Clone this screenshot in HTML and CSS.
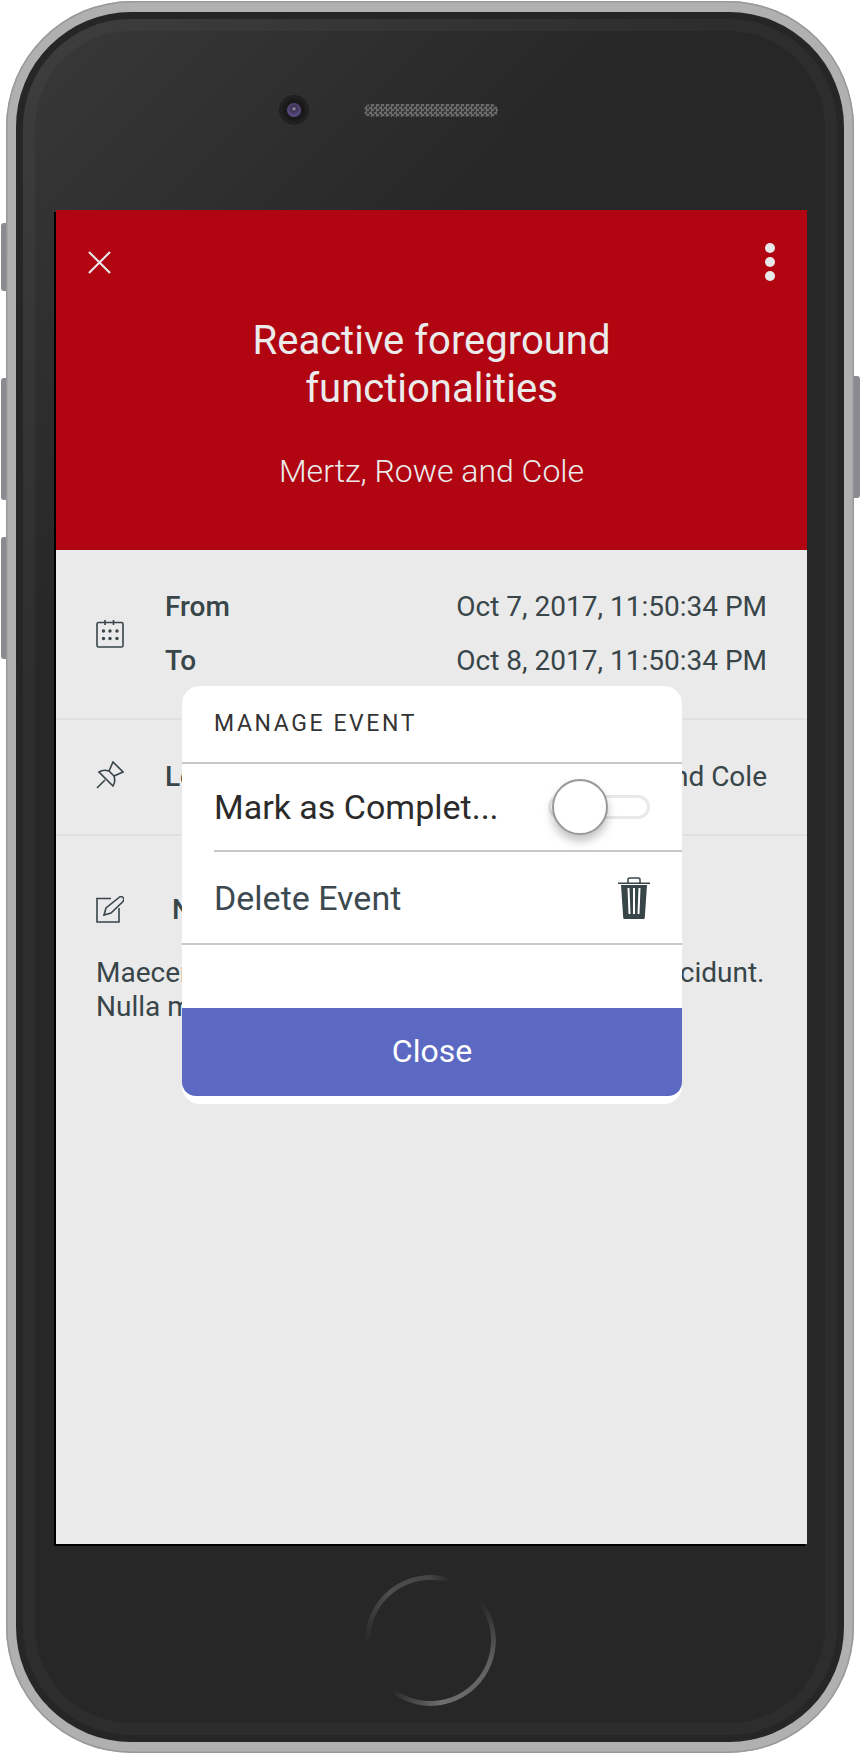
FILE: index.html
```html
<!DOCTYPE html>
<html>
  <head>
    <title>Event Details</title>
    <link rel="stylesheet" href="styles.css">
  </head>
  <body>
    <div class="phone">
      <span class="side-btn btn-mute"></span>
      <span class="side-btn btn-up"></span>
      <span class="side-btn btn-down"></span>
      <span class="side-btn btn-power"></span>
      <div class="bezel">
        <div class="bezel-light">
          <div class="face">
            <div class="top-bar">
              <div class="camera"><div class="camera-ring"><div class="lens"></div></div></div>
              <div class="speaker"></div>
            </div>

            <div class="screen">
              <div class="event-head">
                <div class="head-bar">
                  <svg class="close-icon" viewBox="0 0 24 24">
                    <path d="M1 1l22 22M23 1L1 23"/>
                  </svg>
                  <div class="dots"><span></span><span></span><span></span></div>
                </div>
                <h1 class="event-title">Reactive foreground functionalities</h1>
                <p class="event-company">Mertz, Rowe and Cole</p>
              </div>

              <div class="section section-dates">
                <svg class="icon" viewBox="0 0 28 28">
                  <rect x="1" y="2.5" width="26" height="24.5" rx="1.5"/>
                  <path d="M9 0v5M17.5 0v5"/>
                  <g class="icon-dots">
                    <circle cx="7.5" cy="11" r="1.7"/><circle cx="14" cy="11" r="1.7"/><circle cx="21" cy="11" r="1.7"/>
                    <circle cx="7.5" cy="18.5" r="1.7"/><circle cx="14" cy="18.5" r="1.7"/><circle cx="21" cy="18.5" r="1.7"/>
                  </g>
                </svg>
                <div class="date-rows">
                  <div class="info-row"><span class="info-label">From</span><span>Oct 7, 2017, 11:50:34 PM</span></div>
                  <div class="info-row"><span class="info-label">To</span><span>Oct 8, 2017, 11:50:34 PM</span></div>
                </div>
              </div>

              <div class="section section-location">
                <svg class="icon" viewBox="0 0 28 28">
                  <path d="M3 11c3-2 7-2 10-1l4-9 10 10-9 4c1 3 1 7-1 10z"/>
                  <path d="M13 10l5 5M1 27l8-8"/>
                </svg>
                <div class="info-row location-row"><span class="info-label">Location</span><span>Mertz, Rowe and Cole</span></div>
              </div>

              <div class="section-notes">
                <div class="notes-head">
                  <svg class="icon" viewBox="0 0 28 28">
                    <path d="M15 2.500H1v23.500h22V12"/>
                    <path d="M8 19l2-7L23 1.500c1-1 3-1 4 0s1 3 0 4L15 17z"/>
                  </svg>
                  <span class="info-label">Notes</span>
                </div>
                <p class="notes-text">Maecenas ut massa quis augue luctus ac et tincidunt. Nulla mollis molestie lorem.</p>
              </div>

              <div class="modal">
                <div class="modal-title">MANAGE EVENT</div>
                <div class="modal-row row-complete">
                  <span>Mark as Complet...</span>
                  <div class="toggle"><span class="knob"></span></div>
                </div>
                <div class="modal-row row-delete">
                  <span>Delete Event</span>
                  <svg class="trash" viewBox="0 0 32 42">
                    <path class="trash-handle" d="M10 6V2.500C10 1.500 11 1 12 1h8c1 0 2 .5 2 1.500V6"/>
                    <rect class="trash-fill" x="0" y="5.500" width="32" height="1.500"/>
                    <path class="trash-fill" d="M3 8h26l-2.200 32.500c0 1-.8 1.500-1.800 1.500H7c-1 0-1.800-.5-1.800-1.500z"/>
                    <path class="trash-slot" d="M10.500 11l1 26M16 11v26M21.500 11l-1 26"/>
                  </svg>
                </div>
                <div class="modal-space"></div>
                <button class="modal-close" type="button">Close</button>
              </div>
            </div>

            <div class="bottom-bar">
              <div class="home-btn"></div>
            </div>
          </div>
        </div>
      </div>
    </div>
  </body>
</html>
```

FILE: styles.css
```css
* {
  box-sizing: border-box;
}

body {
  margin: 0;
  height: 1754px;
  background: #ffffff;
  font-family: Roboto, "Liberation Sans", sans-serif;
  overflow: hidden;
}

/* phone shell */
.phone {
  position: relative;
  width: 848px;
  height: 1752px;
  margin: 1px 0 0 6px;
  padding: 11px 10px;
  background: #b0b0b0;
  border-radius: 126px;
  box-shadow: inset 0 0 0 1.500px #999999;
}

.side-btn {
  position: absolute;
  width: 5px;
  left: -5px;
  background: #8a8a90;
  border-radius: 3px 0 0 3px;
}

.btn-mute {
  top: 222px;
  height: 68px;
}

.btn-up {
  top: 377px;
  height: 122px;
}

.btn-down {
  top: 536px;
  height: 122px;
}

.btn-power {
  left: auto;
  right: -6px;
  width: 6px;
  top: 375px;
  height: 122px;
  border-radius: 0 3px 3px 0;
}

.bezel {
  height: 100%;
  padding: 7px;
  background: #262626;
  border-radius: 115px;
}

.bezel-light {
  height: 100%;
  padding: 12px;
  background: linear-gradient(135deg, #3e3e3e 0, #2d2d2d 500px);
  border-radius: 108px;
}

.face {
  height: 100%;
  background: linear-gradient(135deg, #383838 0, #272727 430px);
  border-radius: 96px;
}

.top-bar {
  height: 179px;
  padding: 0 0 21px 244px;
  display: flex;
  align-items: center;
  gap: 55px;
}

.camera {
  width: 30px;
  height: 30px;
  padding: 4px;
  background: #202020;
  border-radius: 50%;
}

.camera-ring {
  height: 100%;
  padding: 4px;
  background: #191919;
  border-radius: 50%;
}

.lens {
  height: 100%;
  background: radial-gradient(circle at 50% 42%, #b5b0c0 0, #3a3350 22%, #5d4d8a 70%, #3b3258 100%);
  border-radius: 50%;
}

.speaker {
  width: 134px;
  height: 13px;
  border-radius: 7px;
  background: repeating-conic-gradient(#6a6a6a 0 25%, #383838 0 50%) 0 0 / 5px 5px;
}

.bottom-bar {
  height: 177px;
  padding-top: 15px;
  display: flex;
  align-items: center;
  justify-content: center;
}

.home-btn {
  width: 131px;
  height: 131px;
  border-radius: 50%;
  background: conic-gradient(#444444 0deg, #272727 18deg, #272727 52deg, #606060 110deg, #6e6e6e 170deg, #272727 218deg, #272727 268deg, #4e4e4e 320deg, #444444 360deg);
  -webkit-mask: radial-gradient(closest-side, transparent 60px, #000 61px);
  mask: radial-gradient(closest-side, transparent 60px, #000 61px);
}

/* screen */
.screen {
  position: relative;
  width: 751px;
  height: 1334px;
  margin-left: 21px;
  background: #eaeaea;
  color: #384549;
  font-size: 28px;
  box-shadow: -2px 2px 0 #000000;
}

.event-head {
  height: 340px;
  padding: 33px 32px 0;
  background: #b10512;
  color: #ebebeb;
  text-align: center;
}

.head-bar {
  display: flex;
  justify-content: space-between;
  align-items: center;
}

.close-icon {
  width: 23px;
  height: 23px;
}

.close-icon path {
  fill: none;
  stroke: #e9e9e9;
  stroke-width: 2.200;
}

.dots {
  display: flex;
  flex-direction: column;
  gap: 4px;
}

.dots span {
  width: 10px;
  height: 10px;
  background: #e9e9e9;
  border-radius: 50%;
}

.event-title {
  margin: 36px auto 0;
  width: 480px;
  font-size: 40px;
  font-weight: 400;
  line-height: 48px;
}

.event-company {
  margin: 38px 0 0;
  font-size: 32px;
  font-weight: 300;
  line-height: 40px;
}

.section {
  display: flex;
  align-items: center;
  padding: 0 40px;
  border-bottom: 2px solid #e0e0e0;
}

.section-dates {
  height: 170px;
  padding-bottom: 1px;
}

.section-location {
  height: 116px;
  padding-bottom: 4px;
}

.icon {
  flex: none;
  width: 28px;
  height: 28px;
  fill: none;
  stroke: #384549;
  stroke-width: 1.600;
}

.icon-dots {
  fill: #384549;
  stroke: none;
}

.date-rows {
  flex: 1;
  margin-left: 41px;
}

.info-row {
  display: flex;
  justify-content: space-between;
  line-height: 30px;
}

.date-rows .info-row + .info-row {
  margin-top: 24px;
}

.location-row {
  flex: 1;
  margin-left: 41px;
  padding-top: 4px;
}

.info-label {
  font-weight: 500;
}

.section-notes {
  padding: 57px 40px 0;
}

.notes-head {
  display: flex;
  align-items: center;
  gap: 48px;
}

.notes-text {
  margin: 30px 0 0;
  line-height: 34px;
}

/* modal */
.modal {
  position: absolute;
  top: 476px;
  left: 126px;
  width: 500px;
  height: 418px;
  display: flex;
  flex-direction: column;
  background: #ffffff;
  border-radius: 18px;
  overflow: hidden;
}

.modal-title {
  height: 78px;
  padding: 0 32px 2px;
  display: flex;
  align-items: center;
  color: #333333;
  font-size: 23px;
  letter-spacing: 2.600px;
  border-bottom: 2px solid #c8c7cc;
}

.modal-row {
  display: flex;
  justify-content: space-between;
  align-items: center;
  font-size: 34px;
}

.row-complete {
  height: 88px;
  margin-left: 32px;
  padding-right: 32px;
  color: #2b2b2b;
  border-bottom: 2px solid #c8c7cc;
}

.row-delete {
  height: 93px;
  padding: 0 32px;
  color: #3c4a50;
  border-bottom: 2px solid #c8c7cc;
}

.toggle {
  position: relative;
  width: 102px;
  height: 24px;
  border: 3px solid #e9e9e9;
  border-radius: 12px;
}

.knob {
  position: absolute;
  top: -19px;
  left: 1px;
  width: 56px;
  height: 56px;
  background: #ffffff;
  border: 2px solid #999999;
  border-radius: 50%;
  box-shadow: 0 6px 10px rgba(0, 0, 0, 0.25);
}

.trash {
  width: 32px;
  height: 42px;
}

.trash-fill {
  fill: #384549;
}

.trash-handle {
  fill: none;
  stroke: #384549;
  stroke-width: 1.500;
}

.trash-slot {
  fill: none;
  stroke: #ffffff;
  stroke-width: 2;
}

.modal-space {
  height: 63px;
}

.modal-close {
  height: 88px;
  padding: 0 0 3px;
  border: none;
  border-radius: 0 0 14px 14px;
  background: #5c69c2;
  color: #ffffff;
  font-family: Roboto, "Liberation Sans", sans-serif;
  font-size: 32px;
}
```
